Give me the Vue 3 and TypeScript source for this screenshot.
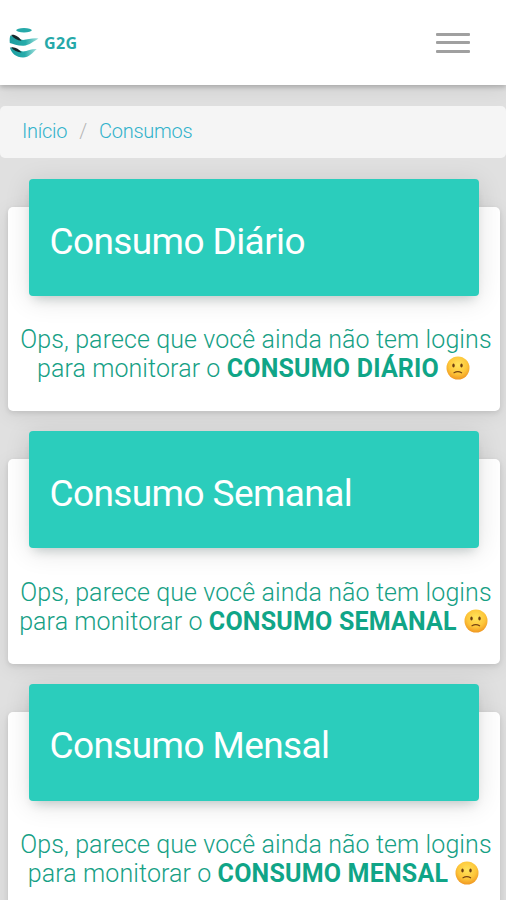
<script setup lang="ts">
interface ConsumptionCard {
  title: string
  label: string
}

const cards: ConsumptionCard[] = [
  { title: 'Consumo Diário', label: 'CONSUMO DIÁRIO' },
  { title: 'Consumo Semanal', label: 'CONSUMO SEMANAL' },
  { title: 'Consumo Mensal', label: 'CONSUMO MENSAL' },
]
</script>

<template>
  <div class="page">
    <svg class="defs" width="0" height="0" aria-hidden="true">
      <defs>
        <radialGradient id="face" cx="50%" cy="36%" r="66%">
          <stop offset="0" stop-color="#ffe45c" />
          <stop offset="0.6" stop-color="#fdc63a" />
          <stop offset="1" stop-color="#ef9420" />
        </radialGradient>
      </defs>
    </svg>
    <header class="navbar">
      <a class="brand">
        <svg class="logo" viewBox="0 0 30 31" aria-hidden="true">
          <defs>
            <linearGradient id="band" x1="0" x2="1">
              <stop offset="0" stop-color="#1c9da0" />
              <stop offset="0.55" stop-color="#26abaa" />
              <stop offset="1" stop-color="#a5e2de" />
            </linearGradient>
          </defs>
          <ellipse cx="15" cy="3.300" rx="7.800" ry="2.200" fill="#26a9a9" />
          <path d="M1.500 8.500C5 8 9 12 14 13C19 12.500 24 10.500 29.500 11.500C26 13.500 20 18.500 14.500 18.800C9 19 4 17 .8 16C.5 12.500 .7 10 1.500 8.500Z" fill="url(#band)" />
          <path d="M2.200 8C5.500 7 10 10 12.500 13.700C8.500 13.500 4.500 11.500 2.200 8Z" fill="#17282b" />
          <path d="M.9 20.500C5 20 9 23.500 14 24.500C19 24 23 21.500 27.800 22C24 25.500 20 30.500 14 30.500C7 30.300 2.500 26.500 .9 20.500Z" fill="url(#band)" />
          <path d="M2.200 20.300C6 19.500 10 22 12.500 25.500C8.500 25.300 4.500 23.500 2.200 20.300Z" fill="#17282b" />
        </svg>
        <span class="brand-name">G2G</span>
      </a>
      <button class="toggle" type="button" aria-label="Menu">
        <span class="bar"></span>
        <span class="bar"></span>
        <span class="bar"></span>
      </button>
    </header>

    <nav class="breadcrumb">
      <a>Início</a>
      <span class="separator">/</span>
      <a>Consumos</a>
    </nav>

    <main class="cards">
      <section v-for="card in cards" :key="card.title" class="card">
        <div class="card-header">
          <h2>{{ card.title }}</h2>
        </div>
        <div class="message">
          <div class="line first">Ops, parece que você ainda não tem logins</div>
          <div class="line">
            para monitorar o <strong>{{ card.label }}</strong>
            <svg class="emoji" viewBox="0 0 24 24" aria-hidden="true">
              <circle cx="12" cy="12" r="11.500" fill="url(#face)" />
              <ellipse cx="7.500" cy="9.500" rx="1.200" ry="2" fill="#6b3d12" />
              <ellipse cx="15.500" cy="9.500" rx="1.200" ry="2" fill="#6b3d12" />
              <path d="M8 16.800Q11.800 14.600 15.600 16.800" fill="none" stroke="#774413" stroke-width="1.200" stroke-linecap="round" />
            </svg>
          </div>
        </div>
      </section>
    </main>
  </div>
</template>

<style>
body {
  margin: 0;
  overflow: hidden;
}
</style>

<style scoped>
.page {
  box-sizing: border-box;
  height: 900px;
  overflow: hidden;
  background: #e0e0e0;
  font-family: Roboto, "Liberation Sans", sans-serif;
  font-weight: 300;
}

.defs {
  display: block;
}

.navbar {
  display: flex;
  align-items: center;
  justify-content: space-between;
  box-sizing: border-box;
  height: 85px;
  padding: 0 36px 0 9px;
  background: #fff;
  box-shadow: 0 2px 5px rgba(0, 0, 0, 0.22), 0 4px 20px rgba(0, 0, 0, 0.08);
}

.brand {
  display: flex;
  align-items: center;
  gap: 5px;
}

.logo {
  width: 30px;
  height: 31px;
}

.brand-name {
  color: #26a9a9;
  font-family: "Open Sans", sans-serif;
  font-size: 16px;
  font-weight: 700;
  line-height: 20px;
  letter-spacing: 0.4px;
}

.toggle {
  display: flex;
  flex-direction: column;
  gap: 5.5px;
  padding: 0;
  border: 0;
  background: none;
}

.bar {
  width: 34px;
  height: 3px;
  border-radius: 1px;
  background: #a0a0a0;
}

.breadcrumb {
  display: flex;
  align-items: center;
  box-sizing: border-box;
  height: 52px;
  margin-top: 21px;
  padding: 0 22px 2px;
  border-radius: 5px;
  background: #f5f5f5;
  color: #31b2cb;
  font-size: 20px;
  line-height: 30px;
  letter-spacing: -0.25px;
}

.separator {
  margin: 0 12px;
  color: #b5b5b5;
}

.cards {
  display: flex;
  flex-direction: column;
  gap: 48px;
  padding: 49px 6.5px 0 7.5px;
}

.card {
  box-sizing: border-box;
  height: 204.4px;
  flex: none;
  padding: 0 21px;
  border-radius: 5px;
  background: #fff;
  box-shadow: 0 2px 5px rgba(0, 0, 0, 0.1), 0 4px 20px rgba(0, 0, 0, 0.08);
}

.card-header {
  display: flex;
  align-items: center;
  box-sizing: border-box;
  height: 117px;
  margin-top: -28px;
  padding: 8.4px 21px 0;
  border-radius: 4px;
  background: #2bcdbc;
  box-shadow: 0 7px 10px -5px rgba(0, 50, 45, 0.2), 0 4px 26px rgba(0, 0, 0, 0.12);
}

h2 {
  margin: 0;
  color: #fff;
  font-size: 37px;
  font-weight: 400;
  line-height: 44px;
  letter-spacing: -0.6px;
}

.message {
  margin: 29.2px -21px 0;
  color: #16a085;
  font-size: 25px;
  line-height: 29px;
  text-align: center;
  white-space: nowrap;
  letter-spacing: 0.1px;
}

.first {
  padding-left: 5px;
}

strong {
  color: #10a587;
  font-weight: 700;
  letter-spacing: 0.2px;
}

.emoji {
  width: 24px;
  height: 24px;
  margin-left: 7px;
  vertical-align: -3px;
}

.line {
  height: 29px;
}
</style>
